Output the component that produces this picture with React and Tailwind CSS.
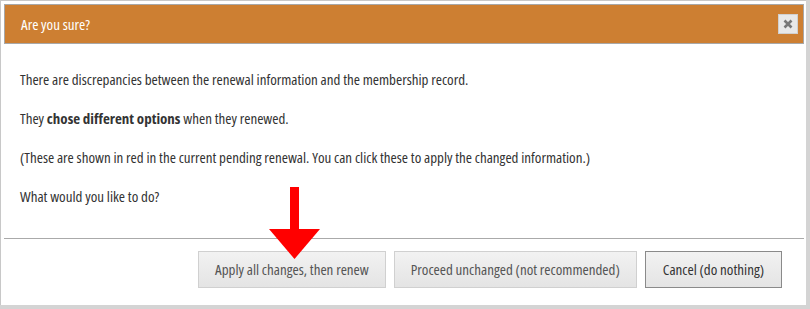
export default function App() {
  return (
    <div className="w-[810px] h-[309px] bg-[#d4d4d4] overflow-hidden" style={{ fontFamily: '"Open Sans", "Liberation Sans", sans-serif' }}>
      <div className="w-[806px] h-[305px] bg-white border-l border-t border-[#c8c8c8] pt-[3px] pl-[3px] pr-[2px] flex flex-col [font-stretch:75%]">
        <div className="h-[40px] bg-[#cd7f32] border border-[#a8a8a8] flex items-center justify-between pl-[16px] pr-[5px]">
          <span className="text-white text-[15px]">Are you sure?</span>
          <button className="w-[20px] h-[20px] bg-[#e8e8e8] border border-[#d0d0d0] flex items-center justify-center">
            <svg width="10" height="10" viewBox="0 0 10 10"><path d="M1.5 1.5 L8.5 8.5 M8.5 1.5 L1.5 8.5" stroke="#777" strokeWidth="2.6" /></svg>
          </button>
        </div>
        <div className="relative flex-1 flex flex-col">
          <div className="pl-[16px] pt-[25px] text-[15px] text-[#333] flex flex-col gap-[19px] leading-[20px]">
            <p>There are discrepancies between the renewal information and the membership record.</p>
            <p>They <b className="font-bold">chose different options</b> when they renewed.</p>
            <p>(These are shown in red in the current pending renewal. You can click these to apply the changed information.)</p>
            <p>What would you like to do?</p>
          </div>
          <div className="mt-[32px] border-t border-[#aaa] flex justify-end gap-[8px] pt-[12px] pr-[22px]">
            <button className="h-[37px] px-[16px] bg-gradient-to-b from-[#f2f2f2] to-[#e4e4e4] border border-[#d0d0d0] text-[#555] text-[15px]">Apply all changes, then renew</button>
            <button className="h-[37px] px-[16px] bg-gradient-to-b from-[#f2f2f2] to-[#e4e4e4] border border-[#d0d0d0] text-[#555] text-[15px]">Proceed unchanged (not recommended)</button>
            <button className="h-[37px] px-[17px] bg-gradient-to-b from-[#f2f2f2] to-[#e4e4e4] border border-[#8a8a8a] text-[#333] text-[15px]">Cancel (do nothing)</button>
          </div>
          <svg className="absolute left-[265px] top-[143px]" width="52" height="73" viewBox="0 0 52 73">
            <rect x="21" y="0" width="9" height="44" fill="#ff0000" />
            <polygon points="0,42 51,42 25.5,72" fill="#ff0000" />
          </svg>
        </div>
      </div>
    </div>
  );
}
